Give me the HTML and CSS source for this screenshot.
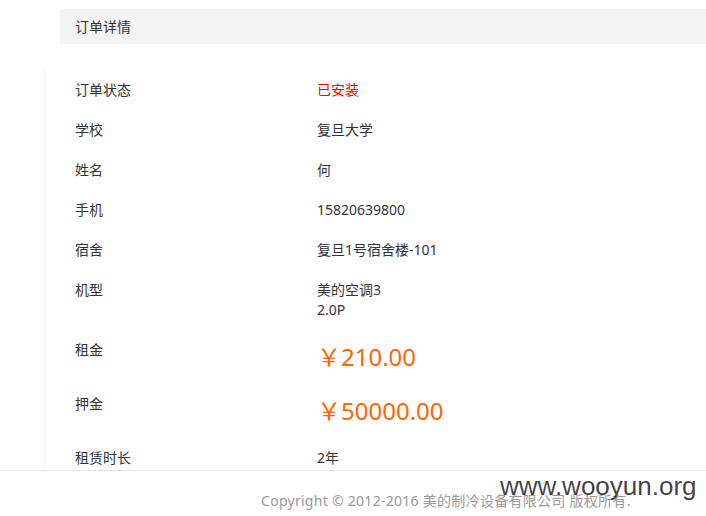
FILE: index.html
```html
<!DOCTYPE html>
<html lang="zh-CN">
<head>
<meta charset="utf-8">
<title>订单详情</title>
<link rel="stylesheet" href="styles.css">
</head>
<body>
<div class="page">
  <div class="panel-head">订单详情</div>
  <div class="detail">
    <div class="row"><div class="label">订单状态</div><div class="value status">已安装</div></div>
    <div class="row"><div class="label">学校</div><div class="value">复旦大学</div></div>
    <div class="row"><div class="label">姓名</div><div class="value">何</div></div>
    <div class="row"><div class="label">手机</div><div class="value">15820639800</div></div>
    <div class="row"><div class="label">宿舍</div><div class="value">复旦1号宿舍楼-101</div></div>
    <div class="row"><div class="label">机型</div><div class="value">美的空调3<br>2.0P</div></div>
    <div class="row"><div class="label">租金</div><div class="value price">￥210.00</div></div>
    <div class="row"><div class="label">押金</div><div class="value price">￥50000.00</div></div>
    <div class="row"><div class="label">租赁时长</div><div class="value">2年</div></div>
  </div>
  <footer class="footer">Copyright © 2012-2016 美的制冷设备有限公司 版权所有.</footer>
  <div class="watermark">www.wooyun.org</div>
</div>
</body>
</html>
```
FILE: styles.css
```css
html, body {
  margin: 0;
  padding: 0;
  background: #fff;
}
body {
  font-family: "Noto Sans", "Noto Sans CJK SC", sans-serif;
  font-size: 14px;
  color: #333;
}
.page {
  position: relative;
  width: 706px;
  height: 516px;
  display: flex;
  flex-direction: column;
  overflow: hidden;
}
.panel-head {
  flex-shrink: 0;
  margin: 9px -20px 0 60px;
  height: 35px;
  line-height: 35px;
  padding-left: 15px;
  background: #f3f3f3;
  border-radius: 3px;
}
.detail {
  flex: 1;
  min-height: 0;
  overflow: hidden;
  margin: 22px 0 0 44px;
  padding-top: 4px;
  border-left: 1px solid #f4f4f4;
}
.row {
  display: grid;
  grid-template-columns: 242px 1fr;
  padding: 10px 0 10px 30px;
  line-height: 20px;
}
.status {
  color: #ff0000;
}
.price {
  font-size: 24px;
  line-height: 34px;
  color: #ff6600;
}
.footer {
  flex-shrink: 0;
  height: 45px;
  border-top: 1px solid #e5e5e5;
  box-sizing: content-box;
  padding: 0 0 0 261px;
  line-height: 60px;
  color: #999;
  font-size: 14px;
  letter-spacing: 0.28px;
}
.watermark {
  position: absolute;
  left: 500px;
  top: 471px;
  font-family: "Liberation Sans", Arial, sans-serif;
  font-size: 26px;
  line-height: 30px;
  color: rgba(30, 30, 30, 0.85);
}
```
